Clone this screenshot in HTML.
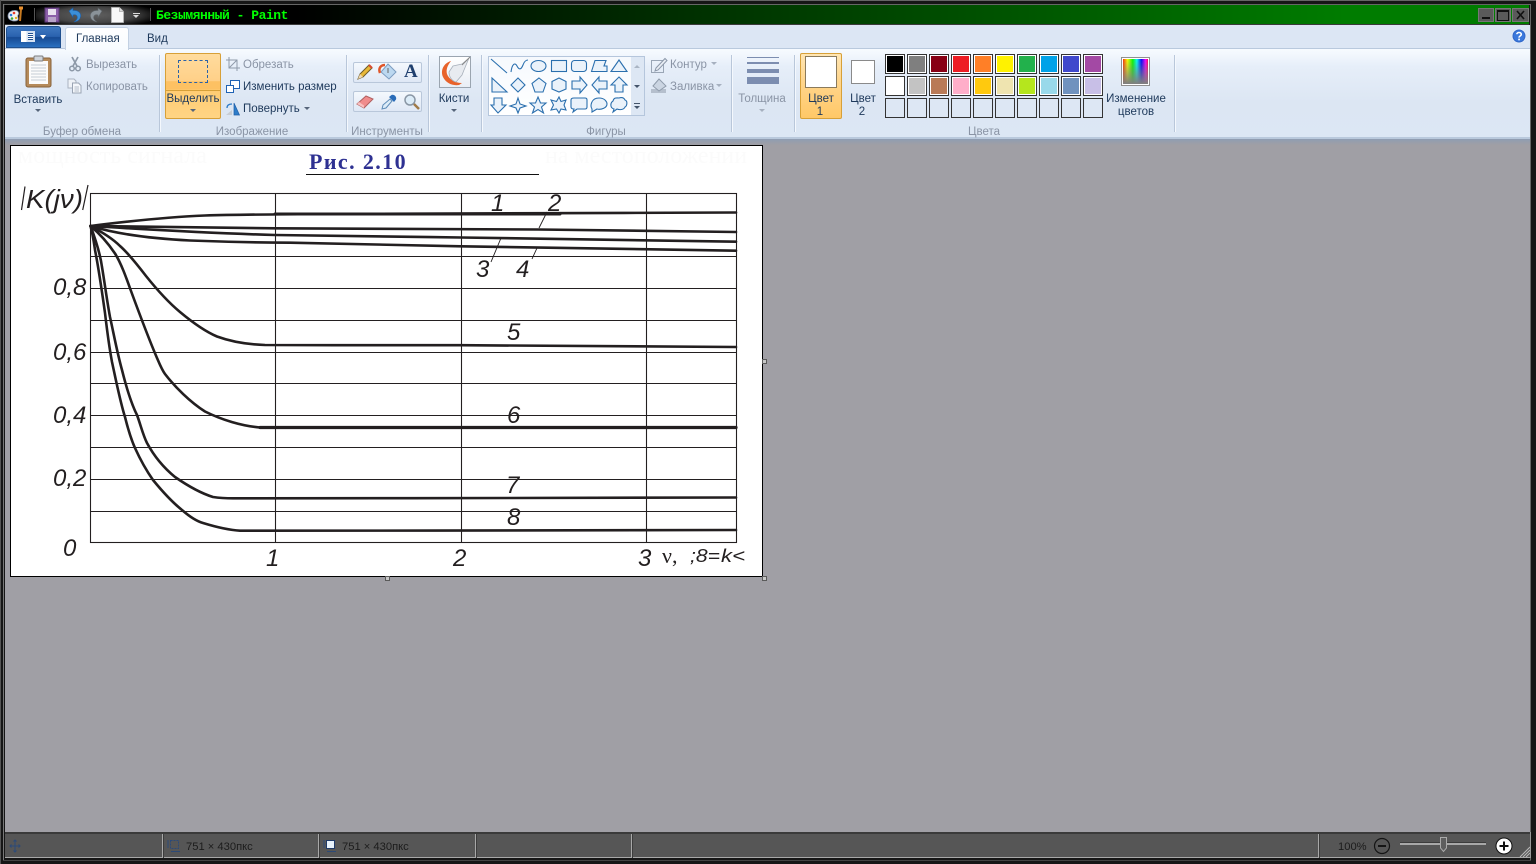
<!DOCTYPE html>
<html lang="ru"><head><meta charset="utf-8"><title>Безымянный - Paint</title>
<style>
html,body{margin:0;padding:0;width:1536px;height:864px;overflow:hidden;background:#141414;font-family:"Liberation Sans",sans-serif;}
.a{position:absolute;}
.t{position:absolute;font-size:11.5px;line-height:14px;color:#1e395b;white-space:nowrap;margin-top:1px;}
.g{color:#8a94a5;}
.c{transform:translateX(-50%);text-align:center;}
.sep{position:absolute;width:1px;top:55px;height:77px;background:#b9c7da;box-shadow:1px 0 0 #f4f8fd;}
.sw{position:absolute;width:20px;height:20px;box-sizing:border-box;border:1px solid #333;outline:0;}
.sw i{display:block;width:16px;height:16px;border:1px solid #fff;}
.em{position:absolute;width:20px;height:20px;box-sizing:border-box;border:1px solid #333;background:#dde7f4;}
.arr{position:absolute;width:0;height:0;border-left:3px solid transparent;border-right:3px solid transparent;border-top:3px solid #56657a;}
.pn{font-family:"Liberation Sans",sans-serif;font-style:italic;font-size:24px;fill:#231f20;}
.st{position:absolute;top:840px;font-size:11.2px;line-height:14px;color:#1c1c1c;white-space:nowrap;}
</style></head><body>

<!-- frame -->
<div class="a" style="left:0;top:0;width:1536px;height:864px;background:#161616"></div>
<div class="a" style="left:0;top:0;width:1536px;height:1px;background:#666"></div>
<div class="a" style="left:3px;top:4px;width:1527px;height:1px;background:#666"></div>
<div class="a" style="left:0;top:0;width:1px;height:864px;background:#555"></div>
<div class="a" style="left:3px;top:4px;width:1px;height:856px;background:#777"></div>
<div class="a" style="left:1530px;top:4px;width:1px;height:856px;background:#666"></div>
<div class="a" style="left:3px;top:860px;width:1528px;height:1px;background:#444"></div>

<!-- title bar -->
<div class="a" style="left:5px;top:5px;width:1524px;height:19px;background:linear-gradient(90deg,#000 0,#000 19%,#003200 46%,#005800 68%,#007c00 88%,#007c00 100%)"></div>
<div class="a" style="left:5px;top:24px;width:1524px;height:1px;background:#3a3a3a"></div>
<div class="a" style="left:36px;top:6px;width:114px;height:18px;background:radial-gradient(ellipse 60% 70% at 50% 50%,#606060 0,#454545 60%,rgba(30,30,30,.5) 90%,rgba(0,0,0,0) 100%)"></div>
<!-- app icon -->
<svg class="a" style="left:7px;top:6px" width="18" height="17" viewBox="0 0 18 17">
<path d="M1 10C1 6 5 4 9 4.500C12 5 12 8 11 9C10 11 12 12 11 14C8 16 1 15 1 10Z" fill="#f2f2f2" stroke="#7a8ca8" stroke-width=".8"/>
<circle cx="4" cy="9" r="1.300" fill="#2b78d8"/><circle cx="7" cy="7" r="1.300" fill="#e83a2c"/><circle cx="5" cy="12.500" r="1.300" fill="#3faa3f"/><circle cx="9" cy="12" r="1.200" fill="#e8b020"/>
<path d="M14 3L13 15" stroke="#c87a20" stroke-width="2"/><path d="M12 2H16" stroke="#e89030" stroke-width="3"/></svg>
<div class="a" style="left:34px;top:8px;width:1px;height:13px;background:#555"></div>
<!-- save -->
<svg class="a" style="left:44px;top:7px" width="16" height="16" viewBox="0 0 16 16"><rect x="1" y="1" width="14" height="14" fill="#8b5fa8" stroke="#5c3a78"/><rect x="4" y="2" width="8" height="6" fill="#e9e2ef"/><rect x="4" y="10" width="8" height="5" fill="#b8a4c8"/></svg>
<!-- undo/redo -->
<svg class="a" style="left:67px;top:7px" width="16" height="16" viewBox="0 0 16 16"><path d="M2 4L6 1V3.500C11 3 14.500 6 13.500 10C13 12.500 10.500 14.500 7 15C10 13 11 11 10 9C9 7.500 7.500 7.500 6 8V10.500Z" fill="#3b8fd8" stroke="#1d5fa8" stroke-width=".6"/></svg>
<svg class="a" style="left:88px;top:7px" width="16" height="16" viewBox="0 0 16 16"><path d="M14 4L10 1V3.500C5 3 1.500 6 2.500 10C3 12.500 5.500 14.500 9 15C6 13 5 11 6 9C7 7.500 8.500 7.500 10 8V10.500Z" fill="#8a9298" stroke="#5d6468" stroke-width=".6"/></svg>
<!-- new -->
<svg class="a" style="left:111px;top:7px" width="13" height="16" viewBox="0 0 13 16"><path d="M.5.500H8.500L12.500 4.500V15.500H.5Z" fill="#f8f8f8" stroke="#bbb" stroke-width=".8"/><path d="M8.500.500V4.500H12.500" fill="#ddd" stroke="#aaa" stroke-width=".8"/></svg>
<div class="a" style="left:133px;top:13px;width:7px;height:1px;background:#ddd"></div>
<div class="a" style="left:133px;top:15px;width:0;height:0;border-left:3.500px solid transparent;border-right:3.500px solid transparent;border-top:3.500px solid #ddd"></div>
<div class="a" style="left:150px;top:8px;width:1px;height:13px;background:#555"></div>
<div class="a" style="left:156px;top:8px;font:bold 13px/15px 'Liberation Mono',monospace;letter-spacing:-.47px;color:#0f0;white-space:nowrap;">Безымянный - Paint</div>

<!-- window controls -->
<div class="a" style="left:1478px;top:8px;width:16px;height:14px;background:#5a5a5a;box-shadow:inset 0 0 0 1px #777"></div>
<div class="a" style="left:1482px;top:17px;width:8px;height:2px;background:#111"></div>
<div class="a" style="left:1495px;top:8px;width:16px;height:14px;background:#5a5a5a;box-shadow:inset 0 0 0 1px #777"></div>
<div class="a" style="left:1497px;top:10px;width:10px;height:8px;border:1px solid #111;border-top-width:2px"></div>
<div class="a" style="left:1512px;top:8px;width:17px;height:14px;background:#5a5a5a;box-shadow:inset 0 0 0 1px #777"></div>
<svg class="a" style="left:1516px;top:10px" width="9" height="10" viewBox="0 0 9 10"><path d="M1 1L8 9M8 1L1 9" stroke="#111" stroke-width="1.600"/></svg>

<!-- tab row + ribbon -->
<div class="a" style="left:5px;top:25px;width:1525px;height:24px;background:#dce6f4"></div>
<div class="a" style="left:5px;top:48px;width:1525px;height:1px;background:#b9c9dd"></div>
<div class="a" style="left:5px;top:49px;width:1525px;height:89px;background:linear-gradient(180deg,#f7fbff 0,#e6eef9 20%,#dce6f3 60%,#dce7f4 100%)"></div>
<div class="a" style="left:5px;top:137px;width:1525px;height:2px;background:#b9c9dc"></div>
<!-- app button -->
<div class="a" style="left:6px;top:26px;width:55px;height:22px;border-radius:3px 3px 0 0;background:linear-gradient(180deg,#3f78c0 0,#2a62ae 48%,#174a92 52%,#2a70c0 100%);box-sizing:border-box;border:1px solid #20508e"></div>
<div class="a" style="left:21px;top:31px;width:14px;height:11px;background:linear-gradient(90deg,#fff 0,#fff 40%,#d6e2f2 40%)"></div>
<div class="a" style="left:28px;top:33px;width:5px;height:7px;background:repeating-linear-gradient(180deg,#204f8e 0,#204f8e 1px,#fff 1px,#fff 2px)"></div>
<div class="a" style="left:40px;top:35px;width:0;height:0;border-left:3.500px solid transparent;border-right:3.500px solid transparent;border-top:4px solid #fff"></div>
<!-- home tab -->
<div class="a" style="left:65px;top:27px;width:64px;height:23px;box-sizing:border-box;border:1px solid #c3d1e3;border-bottom:0;border-radius:3px 3px 0 0;background:linear-gradient(180deg,#fff,#f7fbff)"></div>
<div class="t" style="left:76px;top:31px;">Главная</div>
<div class="t" style="left:147px;top:31px;">Вид</div>
<!-- help -->
<svg class="a" style="left:1511px;top:28px" width="16" height="16" viewBox="0 0 16 16"><circle cx="8" cy="8" r="7" fill="#2f66c8" stroke="#dfe9f7"/><circle cx="8" cy="8" r="5.500" fill="#3a78dc"/><path d="M5.800 6.200C6 3.800 10.500 4 10.300 6.500C10.200 8 8 8 8 9.600" fill="none" stroke="#fff" stroke-width="1.600"/><rect x="7.200" y="10.600" width="1.700" height="1.700" fill="#fff"/></svg>

<!-- separators -->
<div class="sep" style="left:159px"></div><div class="sep" style="left:346px"></div><div class="sep" style="left:428px"></div><div class="sep" style="left:481px"></div><div class="sep" style="left:731px"></div><div class="sep" style="left:794px"></div><div class="sep" style="left:1174px"></div>

<!-- clipboard -->
<svg class="a" style="left:25px;top:55px" width="27" height="33" viewBox="0 0 27 33"><rect x="1" y="3" width="25" height="29" rx="2" fill="#b58a5a" stroke="#87613a"/><rect x="4" y="6" width="19" height="23" fill="#fbfbfb"/><path d="M6 10H21M6 13H21M6 16H21M6 19H21M6 22H21M6 25H21" stroke="#c6ccd4"/><rect x="9" y="1" width="9" height="5" rx="1" fill="#cfd4da" stroke="#7d7d7d"/></svg>
<div class="t c" style="left:38px;top:92px;">Вставить</div>
<div class="arr" style="left:35px;top:109px"></div>
<svg class="a" style="left:69px;top:56px" width="12" height="16" viewBox="0 0 12 16"><path d="M3 1L8 10M9 1L4 10" stroke="#8d99a8" stroke-width="1.700"/><circle cx="3" cy="12.500" r="2.300" fill="none" stroke="#8d99a8" stroke-width="1.500"/><circle cx="9" cy="12.500" r="2.300" fill="none" stroke="#8d99a8" stroke-width="1.500"/></svg>
<div class="t g" style="left:86px;top:57px;">Вырезать</div>
<svg class="a" style="left:67px;top:78px" width="15" height="16" viewBox="0 0 15 16"><path d="M1 1H7L9 3V10H1Z" fill="#eef2f7" stroke="#aab3c0"/><path d="M5.500 5H11.500L14 7.500V15H5.500Z" fill="#f4f7fb" stroke="#9aa4b3"/><path d="M7.500 9H12M7.500 11H12M7.500 13H12" stroke="#b5bdc9"/></svg>
<div class="t g" style="left:86px;top:79px;">Копировать</div>
<div class="t c g" style="left:82px;top:124px;">Буфер обмена</div>

<!-- image group -->
<div class="a" style="left:165px;top:53px;width:56px;height:66px;box-sizing:border-box;border:1px solid #d7a038;border-radius:2px;background:linear-gradient(180deg,#ffdc9e 0,#ffd088 42%,#fdc163 43%,#fdc163 55%,#ffcc72 56%,#ffd484 100%)"></div>
<div class="a" style="left:166px;top:90px;width:54px;height:1px;background:#d7a038"></div>
<div class="a" style="left:178px;top:60px;width:30px;height:23px;box-sizing:border-box;border:1px dashed #2a62a8"></div>
<div class="t c" style="left:193px;top:91px;">Выделить</div>
<div class="arr" style="left:190px;top:109px"></div>
<svg class="a" style="left:226px;top:57px" width="14" height="14" viewBox="0 0 14 14"><path d="M3 0V11H14M0 3H11V14" fill="none" stroke="#8f9aa9"/><path d="M3 11L11 3" stroke="#8f9aa9"/></svg>
<div class="t g" style="left:243px;top:57px;">Обрезать</div>
<svg class="a" style="left:226px;top:80px" width="14" height="13" viewBox="0 0 14 13"><rect x="4.500" y=".5" width="9" height="8" fill="#fff" stroke="#1f62b4"/><rect x=".5" y="5.500" width="7" height="7" fill="#fff" stroke="#1f62b4"/></svg>
<div class="t" style="left:243px;top:79px;">Изменить размер</div>
<svg class="a" style="left:225px;top:102px" width="15" height="14" viewBox="0 0 15 14"><path d="M9 1L14.500 13H9Z" fill="#2e7cc8" stroke="#1f5fa8" stroke-width=".7"/><path d="M1 13L7 8V13Z" fill="#c8cdd4"/><path d="M2 6C2 3 4 2 7 2" fill="none" stroke="#2e7cc8" stroke-width="1.300"/></svg>
<div class="t" style="left:243px;top:101px;">Повернуть</div>
<div class="arr" style="left:304px;top:107px"></div>
<div class="t c g" style="left:252px;top:124px;">Изображение</div>

<!-- tools -->
<div class="a" style="left:353px;top:62px;width:69px;height:21px;box-sizing:border-box;border:1px solid #b9c7da;border-radius:2px;background:linear-gradient(180deg,#f4f8fd,#dfe8f5)"></div>
<div class="a" style="left:353px;top:91px;width:69px;height:21px;box-sizing:border-box;border:1px solid #b9c7da;border-radius:2px;background:linear-gradient(180deg,#f4f8fd,#dfe8f5)"></div>
<svg class="a" style="left:356px;top:63px" width="18" height="18" viewBox="0 0 18 18"><path d="M2 16L4 11L13 2L16 5L7 14Z" fill="#e8b838" stroke="#6c5a28"/><path d="M2 16L4 11L7 14Z" fill="#f0d8b0"/><path d="M13 2L16 5" stroke="#d84a30" stroke-width="2"/></svg>
<svg class="a" style="left:378px;top:62px" width="20" height="20" viewBox="0 0 20 20"><path d="M10 2L18 10L11 17L3 10Z" fill="#bcd8f0" stroke="#7c9cc0"/><path d="M2 11C0 6 3 3 7 3" fill="none" stroke="#e0562a" stroke-width="2.500"/><path d="M10 6V11" stroke="#666"/></svg>
<div class="a" style="left:404px;top:62px;font:bold 19px/20px 'Liberation Serif',serif;color:#1f3f6e;">A</div>
<svg class="a" style="left:356px;top:93px" width="18" height="18" viewBox="0 0 18 18"><path d="M1 11L10 3L17 6L8 15Z" fill="#f08c8c" stroke="#b06060"/><path d="M1 11L8 15L8 12.500L3 9Z" fill="#f8c0c0"/></svg>
<svg class="a" style="left:380px;top:93px" width="18" height="18" viewBox="0 0 18 18"><path d="M2 16L3 12L10 6L12 8L6 15Z" fill="#dcecf8" stroke="#5f8cb8"/><path d="M9 4L14 9L16 6.500C17 4 14 1 11.500 2Z" fill="#2a6cb8"/></svg>
<svg class="a" style="left:403px;top:93px" width="18" height="18" viewBox="0 0 18 18"><circle cx="7" cy="7" r="5" fill="#dcecf8" stroke="#8a97a5" stroke-width="1.500"/><path d="M11 11L16 16" stroke="#a07a48" stroke-width="2.500"/></svg>
<div class="t c g" style="left:387px;top:124px;">Инструменты</div>

<!-- brushes -->
<div class="a" style="left:439px;top:56px;width:32px;height:32px;box-sizing:border-box;border:1px solid #9ba5b0;background:linear-gradient(180deg,#fff,#e9eef5)"></div>
<svg class="a" style="left:440px;top:57px" width="30" height="30" viewBox="0 0 30 30"><path d="M11 4C4 6 0 13 3 20C6 26 12 29 19 28L22 26C14 26 9 22 7 17C6 13 7 9 11 4Z" fill="#e8622a"/><path d="M9 15L13 9L22 7L29 1L24 13L22 18L16 25C12 24 9 20 9 15Z" fill="#e8ebf0" stroke="#a8b0bb" stroke-width=".8"/><path d="M22 8L30 0" stroke="#888"/></svg>
<div class="t c" style="left:454px;top:91px;">Кисти</div>
<div class="arr" style="left:451px;top:109px"></div>

<!-- shapes gallery -->
<div class="a" style="left:488px;top:56px;width:157px;height:60px;box-sizing:border-box;border:1px solid #b5c6dc;background:linear-gradient(180deg,#f6f9fd 0,#fff 100%)"></div>
<div class="a" style="left:631px;top:57px;width:13px;height:58px;background:#dde7f4"></div>
<svg class="a" style="left:488px;top:56px" width="157" height="60" viewBox="0 0 157 60" fill="#eaf2fa" stroke="#2a6fae" stroke-width="1.100">
<path d="M3 3L19 17" fill="none"/>
<path d="M23 16C24 8 27 6 29 10C31 14 33 14 35 9C36 6 38 4 40 4" fill="none"/>
<ellipse cx="50.500" cy="10" rx="7.500" ry="5.500"/>
<rect x="63.500" y="4.500" width="15" height="11"/>
<rect x="83.500" y="4.500" width="15" height="11" rx="3"/>
<path d="M103.500 15.500L107 4.500H118L116 10H119V15.500Z"/>
<path d="M131 4L139 15.500H123Z"/>
<path d="M4 22L19 36H4Z"/>
<path d="M30 22L37 29L30 36L23 29Z"/>
<path d="M51 22L58 27.500L55 36H47L44 27.500Z"/>
<path d="M71 22L78 25.500V33L71 36L64 33V25.500Z"/>
<path d="M84 25H92V21L99 29L92 37V33H84Z"/>
<path d="M119 25H111V21L104 29L111 37V33H119Z"/>
<path d="M123 29L131 21L139 29H135V36H127V29Z"/>
<path d="M6 42V49H3L10 57L18 49H14V42Z"/>
<path d="M30 42L32 48L38 50L32 52L30 57L28 52L22 50L28 48Z"/>
<path d="M50 41L52.500 47H58L53.500 51L55.500 57L50 53.500L44.500 57L46.500 51L42 47H47.500Z"/>
<path d="M71 41L73 45.500L78 44L76 49L78 54L73 53L71 57L68.500 53L63 54L65.500 49L63 44L68.500 45.500Z"/>
<path d="M86 42H97Q99 42 99 44V51Q99 53 97 53H89L85 56L86 53Q83 53 83 51V44Q83 42 86 42Z"/>
<path d="M104 53C102 50 103 42 111 42C117 42 119 46 119 48C119 52 113 54 109 53L104 56Z"/>
<path d="M125 45C126 41 129 42 131 42C134 41 136 42 137 44C140 45 139 50 137 51C136 54 131 54 129 53L125 56L126 53C122 52 122 47 125 45Z"/>
</svg>
<div class="a" style="left:634px;top:65px;width:0;height:0;border-left:3px solid transparent;border-right:3px solid transparent;border-bottom:3px solid #aab5c4"></div>
<div class="a" style="left:634px;top:85px;width:0;height:0;border-left:3px solid transparent;border-right:3px solid transparent;border-top:3px solid #44546a"></div>
<div class="a" style="left:634px;top:103px;width:6px;height:1px;background:#44546a"></div>
<div class="a" style="left:634px;top:106px;width:0;height:0;border-left:3px solid transparent;border-right:3px solid transparent;border-top:3px solid #44546a"></div>
<div class="t c g" style="left:606px;top:124px;">Фигуры</div>
<svg class="a" style="left:651px;top:57px" width="17" height="16" viewBox="0 0 17 16"><rect x=".5" y="3.500" width="12" height="12" fill="none" stroke="#9aa6b6"/><path d="M5 11L14 1.500L16 3.500L7 13L4 14Z" fill="#e8edf4" stroke="#8b97a8"/></svg>
<div class="t g" style="left:670px;top:57px;">Контур</div>
<div class="arr" style="left:711px;top:62px;border-top-color:#a6b0bf"></div>
<svg class="a" style="left:651px;top:78px" width="17" height="16" viewBox="0 0 17 16"><rect x="0" y="11" width="15" height="4" fill="#b5bfcd"/><path d="M8 1L15 8L8 13L2 8Z" fill="#cbd5e2" stroke="#8f9bab"/></svg>
<div class="t g" style="left:670px;top:79px;">Заливка</div>
<div class="arr" style="left:716px;top:84px;border-top-color:#a6b0bf"></div>

<!-- size -->
<div class="a" style="left:747px;top:57px;width:32px;height:1px;background:#7c8db0"></div>
<div class="a" style="left:747px;top:62px;width:32px;height:2px;background:#7c8db0"></div>
<div class="a" style="left:747px;top:69px;width:32px;height:4px;background:#7c8db0"></div>
<div class="a" style="left:747px;top:77px;width:32px;height:7px;background:#7c8db0"></div>
<div class="t c g" style="left:762px;top:91px;">Толщина</div>
<div class="arr" style="left:759px;top:109px;border-top-color:#a6b0bf"></div>

<!-- color 1 / 2 -->
<div class="a" style="left:800px;top:53px;width:42px;height:66px;box-sizing:border-box;border:1px solid #d7a038;border-radius:2px;background:linear-gradient(180deg,#ffe6b4 0,#ffd68e 40%,#ffc868 100%)"></div>
<div class="a" style="left:805px;top:56px;width:32px;height:32px;box-sizing:border-box;border:1px solid #8a7a5c;background:#fff;box-shadow:inset 0 0 0 1px #fff"></div>
<div class="t c" style="left:821px;top:91px;">Цвет</div><div class="t c" style="left:820px;top:104px;">1</div>
<div class="a" style="left:851px;top:60px;width:24px;height:24px;box-sizing:border-box;border:1px solid #8a8a8a;background:#fff"></div>
<div class="t c" style="left:863px;top:91px;">Цвет</div><div class="t c" style="left:862px;top:104px;">2</div>

<!-- swatches -->
<div class="sw" style="left:885px;top:54px"><i style="background:#000"></i></div>
<div class="sw" style="left:907px;top:54px"><i style="background:#7f7f7f"></i></div>
<div class="sw" style="left:929px;top:54px"><i style="background:#880015"></i></div>
<div class="sw" style="left:951px;top:54px"><i style="background:#ed1c24"></i></div>
<div class="sw" style="left:973px;top:54px"><i style="background:#ff7f27"></i></div>
<div class="sw" style="left:995px;top:54px"><i style="background:#fff200"></i></div>
<div class="sw" style="left:1017px;top:54px"><i style="background:#22b14c"></i></div>
<div class="sw" style="left:1039px;top:54px"><i style="background:#00a2e8"></i></div>
<div class="sw" style="left:1061px;top:54px"><i style="background:#3f48cc"></i></div>
<div class="sw" style="left:1083px;top:54px"><i style="background:#a349a4"></i></div>
<div class="sw" style="left:885px;top:76px"><i style="background:#fff"></i></div>
<div class="sw" style="left:907px;top:76px"><i style="background:#c3c3c3"></i></div>
<div class="sw" style="left:929px;top:76px"><i style="background:#b97a57"></i></div>
<div class="sw" style="left:951px;top:76px"><i style="background:#ffaec9"></i></div>
<div class="sw" style="left:973px;top:76px"><i style="background:#ffc90e"></i></div>
<div class="sw" style="left:995px;top:76px"><i style="background:#efe4b0"></i></div>
<div class="sw" style="left:1017px;top:76px"><i style="background:#b5e61d"></i></div>
<div class="sw" style="left:1039px;top:76px"><i style="background:#99d9ea"></i></div>
<div class="sw" style="left:1061px;top:76px"><i style="background:#7092be"></i></div>
<div class="sw" style="left:1083px;top:76px"><i style="background:#c8bfe7"></i></div>
<div class="em" style="left:885px;top:98px"></div><div class="em" style="left:907px;top:98px"></div><div class="em" style="left:929px;top:98px"></div><div class="em" style="left:951px;top:98px"></div><div class="em" style="left:973px;top:98px"></div><div class="em" style="left:995px;top:98px"></div><div class="em" style="left:1017px;top:98px"></div><div class="em" style="left:1039px;top:98px"></div><div class="em" style="left:1061px;top:98px"></div><div class="em" style="left:1083px;top:98px"></div>
<!-- edit colors -->
<div class="a" style="left:1121px;top:57px;width:29px;height:29px;box-sizing:border-box;border:1px solid #8f8f8f;box-shadow:inset 0 0 0 1px #fff;background:linear-gradient(180deg,rgba(128,128,128,0) 0,rgba(128,128,128,1) 95%),linear-gradient(90deg,#f00,#ff0 20%,#0f0 40%,#0ff 55%,#00f 72%,#f0f 88%,#f00)"></div>
<div class="t c" style="left:1136px;top:91px;">Изменение</div><div class="t c" style="left:1136px;top:104px;">цветов</div>
<div class="t c g" style="left:984px;top:124px;">Цвета</div>

<!-- canvas area -->
<div class="a" style="left:5px;top:139px;width:1525px;height:693px;background:#a09fa5"></div>
<div class="a" style="left:5px;top:139px;width:1525px;height:6px;background:linear-gradient(180deg,#8f9db2,#a09fa5)"></div>

<!-- image -->
<div class="a" style="left:10px;top:145px;width:753px;height:432px;box-sizing:border-box;border:1px solid #000;background:#fff"></div>
<svg class="a" style="left:0;top:0" width="800" height="600" viewBox="0 0 800 600">
<g fill="#fbfbfb" font-family="Liberation Serif, serif" font-size="24"><text x="18" y="163">мощность сигнала</text><text x="545" y="163">на местоположении</text></g>
<text x="309" y="169" font-family="Liberation Serif, serif" font-weight="bold" font-size="22" letter-spacing="1.400" fill="#2e3192">Рис. 2.10</text>
<path d="M306 174.500H539" stroke="#111"/>
<g stroke="#231f20" stroke-width="1.100" fill="none">
<rect x="90.500" y="193.500" width="646" height="349"/>
<path d="M275.500 193.500V542.500M461.500 193.500V542.500M646.500 193.500V542.500"/>
<path d="M90.500 256.500H736.500M90.500 288.500H736.500M90.500 320.500H736.500M90.500 352.500H736.500M90.500 383.500H736.500M90.500 415.500H736.500M90.500 447.500H736.500M90.500 479.500H736.500M90.500 511.500H736.500"/>
</g>
<g stroke="#231f20" fill="none" stroke-linejoin="round" stroke-linecap="round" stroke-width="2.600">
<path d="M90.500 226C130 221 170 217 205 215.500C240 214.500 275 214.300 330 214C461 213.500 600 213 736 212.500"/>
<path d="M90.500 226C140 227 200 227.500 275 228.300C370 228.800 460 229 538 229.500C610 230 680 231 736 232"/>
<path d="M90.500 226C140 229 200 233 275 235C340 236 400 236.500 461 237.500C560 239 650 240.500 736 241.700"/>
<path d="M90.500 226C110 232 140 238 190 240.500C230 242 255 242.500 290 242.700C350 243.500 410 245 461 246.300C560 248 650 249.500 736 250.700"/>
<path d="M90.500 226C102 232 112 238 120 246C128 253 136 263 146 276C158 291 168 302 180 312C192 322 204 331 217 336.500C232 342 250 344.500 265 345C330 345.500 400 345 461 345.200C560 345.500 650 346 736 347"/>
<path d="M90.500 226C100 234 108 243 115 253.500C121 263 126 277 131 291C138 310 148 337 157 358C160 365 162 370 165 374C175 387 190 402 205 411.500C222 420 242 426 260 427.500C400 427.500 600 427.500 736 427.500"/>
<path d="M90.500 226C95 238 100 252 102 267C105 285 107 301 110 317C114 335 117 352 122 370C127 390 132 405 137 415C141 426 143 435 147 443C154 456 164 468 175 477C188 486 200 493 213 497C220 498 226 498.300 233 498.300C400 498.300 600 498 736 497.500"/>
<path d="M90.500 226C93 235 94 243 95 250C99 270 102 292 105 313C107 330 109 346 112 362C117 385 120 401 125 417C128 429 131 439 135 448C140 459 146 470 153 480C162 491 172 502 182 510C190 517 196 521 203 523C216 527 228 530 240 530.700C400 530.700 600 530.500 736 530"/>
<path d="M260 427.500H736" stroke-width="3.200"/>
<path d="M275 214H560" stroke-width="3"/>
</g>
<g stroke="#231f20" fill="none" stroke-width=".9">
<path d="M539 228L547 212M491 262L501 238M532 259L537 248"/>
</g>
<path d="M21.500 210L25 186.500M82.700 210L88 185" stroke="#231f20" stroke-width="1.200" fill="none"/>
<text x="26" y="208" font-family="Liberation Sans, sans-serif" font-style="italic" font-size="26" fill="#231f20" textLength="57" lengthAdjust="spacingAndGlyphs">K(jν)</text>
<text class="pn" x="53" y="295">0,8</text>
<text class="pn" x="53" y="360">0,6</text>
<text class="pn" x="53" y="423">0,4</text>
<text class="pn" x="53" y="486">0,2</text>
<text class="pn" x="63" y="556">0</text>
<text class="pn" x="266" y="566">1</text>
<text class="pn" x="453" y="566">2</text>
<text class="pn" x="638" y="566">3</text>
<text x="662" y="563" font-family="Liberation Serif, serif" font-size="22" fill="#231f20">ν,</text>
<text x="690" y="562" font-family="Liberation Sans, sans-serif" font-style="italic" font-size="18" fill="#231f20" textLength="30" lengthAdjust="spacingAndGlyphs">;8=</text>
<text x="721" y="562" font-family="Liberation Sans, sans-serif" font-style="italic" font-size="18" fill="#231f20" textLength="24" lengthAdjust="spacingAndGlyphs">k&lt;</text>
<text class="pn" x="491" y="211">1</text>
<text class="pn" x="548" y="211">2</text>
<text class="pn" x="476" y="277">3</text>
<text class="pn" x="516" y="277">4</text>
<text class="pn" x="507" y="340">5</text>
<text class="pn" x="507" y="423">6</text>
<text class="pn" x="506" y="493">7</text>
<text class="pn" x="507" y="525">8</text>
<g fill="#c8c8c8" stroke="#5a5a5a"><rect x="762.500" y="359.500" width="4" height="4"/><rect x="385.500" y="576.500" width="4" height="4"/><rect x="762.500" y="576.500" width="4" height="4"/></g>
</svg>

<!-- status bar -->
<div class="a" style="left:5px;top:832px;width:1525px;height:2px;background:#3a3a3a"></div>
<div class="a" style="left:5px;top:834px;width:1525px;height:24px;background:#565656"></div>
<div class="a" style="left:5px;top:857px;width:1525px;height:1px;background:#a8a8a8"></div>
<div class="a" style="left:162px;top:834px;width:1px;height:24px;background:#a8a8a8;box-shadow:1px 0 0 #3c3c3c"></div>
<div class="a" style="left:318px;top:834px;width:1px;height:24px;background:#a8a8a8;box-shadow:1px 0 0 #3c3c3c"></div>
<div class="a" style="left:475px;top:834px;width:1px;height:24px;background:#a8a8a8;box-shadow:1px 0 0 #3c3c3c"></div>
<div class="a" style="left:631px;top:834px;width:1px;height:24px;background:#a8a8a8;box-shadow:1px 0 0 #3c3c3c"></div>
<div class="a" style="left:1318px;top:834px;width:1px;height:24px;background:#a8a8a8;box-shadow:1px 0 0 #3c3c3c"></div>
<div class="a" style="left:1530px;top:832px;width:1px;height:26px;background:#999"></div>
<svg class="a" style="left:9px;top:839px" width="12" height="14" viewBox="0 0 12 14"><path d="M6 1V13M1 7H11M4.500 2.500L6 1L7.500 2.500M4.500 11.500L6 13L7.500 11.500M2.500 5.500L1 7L2.500 8.500M9.500 5.500L11 7L9.500 8.500" fill="none" stroke="#2c4a78"/></svg>
<svg class="a" style="left:166px;top:839px" width="15" height="14" viewBox="0 0 15 14"><rect x="4.500" y="1.500" width="8" height="8" fill="none" stroke="#2c4a78" stroke-dasharray="2 1"/><path d="M2 1V9M5 12.500H14" stroke="#2c4a78"/></svg>
<div class="st" style="left:186px;">751 × 430пкс</div>
<svg class="a" style="left:322px;top:839px" width="15" height="14" viewBox="0 0 15 14"><rect x="4.500" y="1.500" width="8" height="8" fill="#e8f2fb" stroke="#1f3a68"/><path d="M2 1V9M5 12.500H14" stroke="#2c4a78"/></svg>
<div class="st" style="left:342px;">751 × 430пкс</div>
<div class="st" style="left:1338px;">100%</div>
<svg class="a" style="left:1373px;top:837px" width="18" height="18" viewBox="0 0 18 18"><circle cx="9" cy="9" r="7.500" fill="none" stroke="#151515" stroke-width="1.200"/><path d="M5 9H13" stroke="#151515" stroke-width="2"/></svg>
<div class="a" style="left:1400px;top:843px;width:86px;height:2px;background:#a8a8a8;box-shadow:0 -1px 0 #3c3c3c"></div>
<svg class="a" style="left:1438px;top:836px" width="11" height="17" viewBox="0 0 11 17"><path d="M2.500 1.500H8.500V12L5.500 15.500L2.500 12Z" fill="#5e5e5e" stroke="#aaa"/></svg>
<svg class="a" style="left:1495px;top:837px" width="18" height="18" viewBox="0 0 18 18"><circle cx="9" cy="9" r="8" fill="#fff" stroke="#111"/><path d="M4.500 9H13.500M9 4.500V13.500" stroke="#111" stroke-width="2"/></svg>
<svg class="a" style="left:1519px;top:846px" width="11" height="11" viewBox="0 0 11 11"><path d="M1 11L11 1M4 11L11 4M7 11L11 7" stroke="#b8b8b8"/></svg>
</body></html>
